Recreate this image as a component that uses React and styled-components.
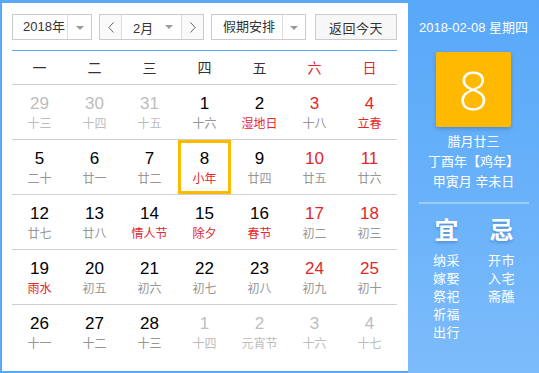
import React from "react";
import styled, { createGlobalStyle } from "styled-components";

const Global = createGlobalStyle`
  html, body { margin: 0; padding: 0; background: #fff; }
  body { font-family: "Liberation Sans", "Noto Sans CJK SC", sans-serif; }
  * { box-sizing: border-box; }
`;

const BLUE = "#5aa9f8";

const Frame = styled.div`
  display: flex;
  width: 539px;
  height: 373px;
`;

const Main = styled.div`
  width: 408px;
  height: 373px;
  border-top: 3px solid ${BLUE};
  border-left: 2px solid ${BLUE};
  border-bottom: 2px solid ${BLUE};
  padding: 11px 11px 0 10px;
  display: flex;
  flex-direction: column;
`;

const Toolbar = styled.div`
  display: flex;
  height: 26px;
  align-items: stretch;
`;

const Select = styled.div`
  display: flex;
  width: ${(p) => p.$w}px;
  margin-right: ${(p) => p.$mr || 0}px;
  border: 1px solid #cbcbcb;
  background: #fff;
  font-size: 13px;
  color: #333;
`;

const SelectLabel = styled.div`
  flex: 1;
  display: flex;
  align-items: center;
  padding-left: ${(p) => p.$pl}px;
  line-height: 24px;
`;

const ArrowCell = styled.div`
  width: ${(p) => p.$w || 23}px;
  display: flex;
  align-items: center;
  justify-content: center;
  border-left: ${(p) => (p.$noline ? "none" : "1px solid #dcdcdc")};
  &::after {
    content: "";
    border-left: 4px solid transparent;
    border-right: 4px solid transparent;
    border-top: 4px solid #9a9a9a;
    margin-top: 1px;
  }
`;

const NavBtn = styled.div`
  width: ${(p) => p.$w}px;
  display: flex;
  align-items: center;
  justify-content: center;
  background: #fafafa;
  border-left: ${(p) => (p.$line ? "1px solid #dcdcdc" : "none")};
  border-right: ${(p) => (p.$rline ? "1px solid #dcdcdc" : "none")};
`;

const MonthPart = styled.div`
  flex: 1;
  display: flex;
  align-items: center;
  padding-left: 11px;
`;

const Spacer = styled.div`
  flex: 1;
`;

const MiniArrow = styled.span`
  width: 0;
  height: 0;
  margin-right: 8px;
  border-left: 4px solid transparent;
  border-right: 4px solid transparent;
  border-top: 4px solid #9a9a9a;
`;

const TodayBtn = styled.div`
  width: 82px;
  margin-left: auto;
  border: 1px solid #cbcbcb;
  background: #f7f7f7;
  font-size: 13px;
  color: #333;
  display: flex;
  align-items: center;
  justify-content: center;
  letter-spacing: 0.5px;
`;

const BlueRule = styled.div`
  height: 1px;
  background: ${BLUE};
  margin-top: 10px;
`;

const Grid = styled.div`
  display: grid;
  grid-template-columns: repeat(7, 55px);
`;

const HeadCell = styled.div`
  height: 34px;
  border-bottom: 1px solid #cfcfcf;
  display: flex;
  align-items: center;
  justify-content: center;
  font-size: 14px;
  color: ${(p) => (p.$red ? "#e3262b" : "#333")};
  padding-bottom: 1px;
`;

const Cell = styled.div`
  height: 55px;
  border-bottom: ${(p) => (p.$last ? "none" : "1px solid #cfcfcf")};
  display: flex;
  justify-content: center;
  padding-left: 1px;
`;

const Day = styled.div`
  width: 53px;
  height: 54px;
  border: 3px solid ${(p) => (p.$sel ? "#ffba00" : "transparent")};
  padding-top: 7px;
  display: flex;
  flex-direction: column;
  align-items: center;
  margin-right: 1px;
`;

const Num = styled.div`
  font-size: 17px;
  line-height: 18px;
  color: ${(p) => (p.$other ? "#bdbdbd" : p.$red ? "#e3262b" : "#000")};
`;

const Lunar = styled.div`
  font-size: 12px;
  line-height: 22px;
  color: ${(p) => (p.$other ? "#bdbdbd" : p.$red ? "#e3262b" : "#969696")};
  white-space: nowrap;
`;

const Side = styled.div`
  width: 131px;
  height: 373px;
  background: linear-gradient(180deg, #58a8f9 0%, #6ab2fa 55%, #7dbcfb 100%);
  color: #fff;
  display: flex;
  flex-direction: column;
  align-items: center;
  padding-top: 19px;
`;

const DateLine = styled.div`
  font-size: 13px;
  line-height: 18px;
  white-space: nowrap;
`;

const BigBox = styled.div`
  width: 75px;
  height: 75px;
  margin-top: 15px;
  background: #ffb900;
  border-radius: 2px;
  box-shadow: 0 2px 4px rgba(0, 0, 0, 0.18);
  display: flex;
  align-items: center;
  justify-content: center;
  font-size: 53px;
  font-weight: 300;
  font-family: "Open Sans", "Liberation Sans", sans-serif;
  line-height: 1;
`;

const LunarInfo = styled.div`
  margin-top: 5px;
  font-size: 13px;
  line-height: 20px;
  text-align: center;
  white-space: nowrap;
`;

const Sep = styled.div`
  width: 110px;
  height: 2px;
  margin-top: 10px;
  margin-left: 1px;
  background: rgba(255, 255, 255, 0.35);
`;

const YiJi = styled.div`
  display: grid;
  grid-template-columns: 55px 55px;
  margin-top: 14px;
  margin-left: 1px;
`;

const YiCol = styled.div`
  display: flex;
  flex-direction: column;
  align-items: center;
`;

const YiTitle = styled.div`
  font-size: 24px;
  font-weight: bold;
  line-height: 26px;
  text-shadow: 0 2px 3px rgba(0, 40, 100, 0.25);
  margin-bottom: 8px;
`;

const YiItem = styled.div`
  font-size: 13px;
  line-height: 18px;
  letter-spacing: 0.5px;
`;

const Chevron = ({ dir }) => (
  <svg width="6" height="11" viewBox="0 0 6 11">
    <polyline
      points={dir === "l" ? "5.5,0.5 0.8,5.5 5.5,10.5" : "0.5,0.5 5.2,5.5 0.5,10.5"}
      fill="none"
      stroke="#666"
      strokeWidth="1"
    />
  </svg>
);

const heads = ["一", "二", "三", "四", "五", "六", "日"];

// [num, lunar, other, lunarRed]
const rows = [
  [["29", "十三", 1], ["30", "十四", 1], ["31", "十五", 1], ["1", "十六"], ["2", "湿地日", 0, 1], ["3", "十八"], ["4", "立春", 0, 1]],
  [["5", "二十"], ["6", "廿一"], ["7", "廿二"], ["8", "小年", 0, 1], ["9", "廿四"], ["10", "廿五"], ["11", "廿六"]],
  [["12", "廿七"], ["13", "廿八"], ["14", "情人节", 0, 1], ["15", "除夕", 0, 1], ["16", "春节", 0, 1], ["17", "初二"], ["18", "初三"]],
  [["19", "雨水", 0, 1], ["20", "初五"], ["21", "初六"], ["22", "初七"], ["23", "初八"], ["24", "初九"], ["25", "初十"]],
  [["26", "十一"], ["27", "十二"], ["28", "十三"], ["1", "十四", 1], ["2", "元宵节", 1], ["3", "十六", 1], ["4", "十七", 1]],
];

const yi = ["纳采", "嫁娶", "祭祀", "祈福", "出行"];
const ji = ["开市", "入宅", "斋醮"];

export default function App() {
  return (
    <>
      <Global />
      <Frame>
        <Main>
          <Toolbar>
            <Select $w={80} $mr={7}>
              <SelectLabel $pl={10}>2018年</SelectLabel>
              <ArrowCell $w={24} />
            </Select>
            <Select $w={105} $mr={7}>
              <NavBtn $w={22} $rline>
                <Chevron dir="l" />
              </NavBtn>
              <MonthPart>
                2月
                <Spacer />
                <MiniArrow />
              </MonthPart>
              <NavBtn $w={22} $line>
                <Chevron dir="r" />
              </NavBtn>
            </Select>
            <Select $w={95}>
              <SelectLabel $pl={11}>假期安排</SelectLabel>
              <ArrowCell $w={23} />
            </Select>
            <TodayBtn>返回今天</TodayBtn>
          </Toolbar>
          <BlueRule />
          <Grid>
            {heads.map((h, i) => (
              <HeadCell key={h} $red={i >= 5}>
                {h}
              </HeadCell>
            ))}
            {rows.map((r, ri) =>
              r.map(([n, l, other, lred], ci) => (
                <Cell key={ri + "-" + ci} $last={ri === rows.length - 1}>
                  <Day $sel={ri === 1 && ci === 3}>
                    <Num $other={other} $red={ci >= 5}>
                      {n}
                    </Num>
                    <Lunar $other={other} $red={lred}>
                      {l}
                    </Lunar>
                  </Day>
                </Cell>
              ))
            )}
          </Grid>
        </Main>
        <Side>
          <DateLine>2018-02-08 星期四</DateLine>
          <BigBox>8</BigBox>
          <LunarInfo>
            <div>腊月廿三</div>
            <div>丁酉年【鸡年】</div>
            <div>甲寅月 辛未日</div>
          </LunarInfo>
          <Sep />
          <YiJi>
            <YiCol>
              <YiTitle>宜</YiTitle>
              {yi.map((t) => (
                <YiItem key={t}>{t}</YiItem>
              ))}
            </YiCol>
            <YiCol>
              <YiTitle>忌</YiTitle>
              {ji.map((t) => (
                <YiItem key={t}>{t}</YiItem>
              ))}
            </YiCol>
          </YiJi>
        </Side>
      </Frame>
    </>
  );
}
